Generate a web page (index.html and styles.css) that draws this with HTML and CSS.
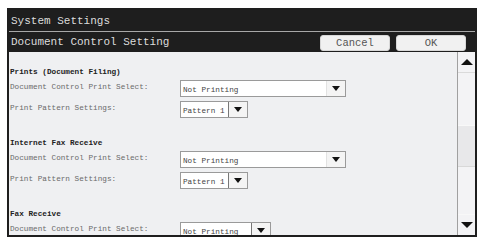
FILE: index.html
```html
<!DOCTYPE html>
<html lang="en">
<head>
    <meta charset="UTF-8">
    <title>System Settings - Document Control Setting</title>
    <link rel="stylesheet" href="styles.css">
</head>
<body>
    <div class="frame">
        <div class="title-bar">System Settings</div>
        <div class="sub-bar">
            <span class="sub-title">Document Control Setting</span>
            <div class="actions">
                <button class="btn">Cancel</button>
                <button class="btn">OK</button>
            </div>
        </div>

        <div class="main">
            <div class="content">
                <div class="section">
                    <div class="section-title">Prints (Document Filing)</div>
                    <div class="row">
                        <span class="label">Document Control Print Select:</span>
                        <div class="select wide"><span class="value">Not Printing</span><span class="arrow"></span></div>
                    </div>
                    <div class="row">
                        <span class="label">Print Pattern Settings:</span>
                        <div class="select small"><span class="value">Pattern 1</span><span class="arrow divided"></span></div>
                    </div>
                </div>

                <div class="section">
                    <div class="section-title">Internet Fax Receive</div>
                    <div class="row">
                        <span class="label">Document Control Print Select:</span>
                        <div class="select wide"><span class="value">Not Printing</span><span class="arrow"></span></div>
                    </div>
                    <div class="row">
                        <span class="label">Print Pattern Settings:</span>
                        <div class="select small"><span class="value">Pattern 1</span><span class="arrow divided"></span></div>
                    </div>
                </div>

                <div class="section">
                    <div class="section-title">Fax Receive</div>
                    <div class="row">
                        <span class="label">Document Control Print Select:</span>
                        <div class="select medium"><span class="value">Not Printing</span><span class="arrow divided"></span></div>
                    </div>
                </div>
            </div>

            <div class="scrollbar">
                <div class="scroll-btn"><span class="tri up"></span></div>
                <div class="track">
                    <div class="thumb"></div>
                </div>
                <div class="scroll-btn bottom"><span class="tri down"></span></div>
            </div>
        </div>
    </div>
</body>
</html>
```

FILE: styles.css
```css
* {
    margin: 0;
    padding: 0;
    box-sizing: border-box;
    font-family: "Liberation Mono", "Courier New", monospace;
}

body {
    background-color: #ffffff;
    padding: 8px 7px;
}

.frame {
    width: 470px;
    height: 229px;
    border: 2px solid #1e1e1e;
    background-color: #eff0f2;
    display: flex;
    flex-direction: column;
    overflow: hidden;
}

.title-bar {
    height: 22px;
    background-color: #1e1e1e;
    color: #dcdcdc;
    font-size: 11px;
    line-height: 22px;
    padding-left: 2px;
    border-bottom: 1px solid #a8a8a8;
}

.sub-bar {
    height: 20px;
    background-color: #1e1e1e;
    color: #dcdcdc;
    font-size: 11px;
    display: flex;
    align-items: center;
    justify-content: space-between;
    padding-left: 2px;
    padding-right: 9px;
}

.actions {
    display: flex;
    gap: 6px;
    padding-top: 2px;
}

.btn {
    width: 70px;
    height: 16px;
    background-color: #f1f1f1;
    border: 1px solid #d8d8d8;
    border-radius: 3px;
    color: #555;
    font-size: 10.5px;
    line-height: 14px;
}

.main {
    flex: 1;
    display: flex;
    min-height: 0;
}

.content {
    flex: 1;
    padding: 14px 0 0 1px;
    overflow: hidden;
}

.section {
    height: 71px;
}

.section-title {
    font-size: 7.7px;
    font-weight: bold;
    color: #222;
    line-height: 12px;
    height: 14px;
}

.row {
    display: flex;
    align-items: flex-start;
    margin-bottom: 4px;
}

.label {
    width: 170px;
    font-size: 7.7px;
    color: #6a6a6a;
    line-height: 12px;
    padding-top: 1px;
}

.select {
    height: 17px;
    background-color: #fff;
    border: 1px solid #9a9a9a;
    display: flex;
    align-items: stretch;
}

.select.wide {
    width: 166px;
}

.select.small {
    width: 68px;
}

.select.medium {
    width: 91px;
}

.value {
    flex: 1;
    font-size: 7.7px;
    color: #444;
    line-height: 15px;
    padding-left: 2px;
    padding-top: 2px;
}

.arrow {
    width: 19px;
    background-color: #f4f4f4;
    display: flex;
    align-items: center;
    justify-content: center;
    border-left: 1px solid #e2e2e2;
}

.arrow.divided {
    border-left: 1px solid #777;
}

.arrow::after {
    content: "";
    border-left: 4.5px solid transparent;
    border-right: 4.5px solid transparent;
    border-top: 5px solid #111;
}

.scrollbar {
    width: 18px;
    border-left: 1px solid #a0a0a0;
    background-color: #f3f3f5;
    display: flex;
    flex-direction: column;
}

.scroll-btn {
    height: 21px;
    display: flex;
    align-items: center;
    justify-content: center;
    border-bottom: 1px solid #dadada;
}

.scroll-btn.bottom {
    border-bottom: none;
    border-top: 1px solid #f8f8f8;
}

.tri {
    width: 0;
    height: 0;
    border-left: 6px solid transparent;
    border-right: 6px solid transparent;
}

.tri.up {
    border-bottom: 6px solid #111;
}

.tri.down {
    border-top: 6px solid #111;
}

.track {
    flex: 1;
    padding-top: 52px;
}

.thumb {
    height: 42px;
    background-color: #e8e8ea;
    border-top: 1px solid #f8f8f8;
    border-bottom: 1px solid #d8d8d8;
}
```
